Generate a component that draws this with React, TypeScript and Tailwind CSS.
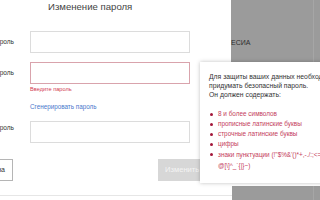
import React from "react";

const items = [
  "8 и более символов",
  "прописные латинские буквы",
  "строчные латинские буквы",
  "цифры",
];

export default function App() {
  return (
    <div
      className="relative w-[320px] h-[200px] overflow-hidden bg-white text-[#333]"
      style={{ fontFamily: '"Liberation Sans", Arial, sans-serif' }}
    >
      {/* form */}
      <div className="flex flex-col">
        <div className="pl-[48px] h-[14px] leading-[14px] text-[9.6px] text-[#444]">
          Изменение пароля
        </div>
        <div className="ml-[-60px] mt-[17px] grid grid-cols-[74px_160px] gap-x-[16px]">
          <div className="h-[22px] flex items-center justify-end text-[6.5px]">Старый пароль</div>
          <div className="h-[22px] border border-[#dcdcdc] bg-white" />

          <div className="h-[22px] mt-[9px] flex items-center justify-end text-[6.5px]">Новый пароль</div>
          <div className="h-[22px] mt-[9px] border border-[#d9a3ac] bg-white" />

          <div />
          <div className="mt-[1px] leading-[8px] text-[5.6px] text-[#d23a52]">Введите пароль</div>

          <div />
          <div className="mt-[10px] leading-[8px] text-[6.3px] text-[#4a78cc]">Сгенерировать пароль</div>

          <div className="h-[22px] mt-[10px] pt-[2px] flex items-start justify-end text-[6.5px]">Повторите пароль</div>
          <div className="h-[22px] mt-[10px] border border-[#dcdcdc] bg-white" />
        </div>
        <div className="mt-[16px] flex items-start">
          <div className="ml-[-28px] w-[41px] h-[22px] border border-[#b5b5b5] flex items-center justify-end pr-[7px] text-[7px] text-[#333]">
            Отмена
          </div>
          <div className="ml-[145px] w-[80px] h-[22px] bg-[#d7d7d7] flex items-center pl-[7px] text-[7.6px] text-[#f4f4f4]">
            Изменить
          </div>
        </div>
        <div className="mt-[14px] w-[232px] h-px bg-[#e6e6e6]" />
      </div>

      {/* dimmed region top-right */}
      <div className="absolute left-[231px] top-0 w-[89px] h-[62px] bg-[#9b9b9b] flex">
        <div className="flex-1 pt-[39px] text-[7px] text-[#2e2e2e] leading-[8px]">ЕСИА</div>
        <div className="w-px h-full bg-[#a6a6a6] mr-[6px]" />
      </div>
      {/* dimmed region bottom-right */}
      <div className="absolute left-[232px] top-[186px] w-[88px] h-[14px] bg-[#9b9b9b] flex justify-end">
        <div className="w-px h-full bg-[#a6a6a6] mr-[6px]" />
      </div>

      {/* popup */}
      <div className="absolute left-[200px] top-[62px] w-[140px] h-[121px] bg-white shadow-[0_0_4px_rgba(0,0,0,0.25)] pl-[9px] pt-[10px]">
        <div className="text-[6.8px] leading-[9px] text-[#333] whitespace-nowrap">
          <div>Для защиты ваших данных необходимо</div>
          <div>придумать безопасный пароль.</div>
          <div>Он должен содержать:</div>
        </div>
        <ul className="mt-[10px] text-[6.4px] leading-[10px] text-[#c4405c] whitespace-nowrap">
          {items.map((t) => (
            <li key={t} className="flex items-start">
              <span className="w-[3px] h-[3px] rounded-full bg-[#a3173a] mt-[4px] ml-[1px] mr-[5px] shrink-0" />
              <span>{t}</span>
            </li>
          ))}
          <li className="flex items-start">
            <span className="w-[3px] h-[3px] rounded-full bg-[#a3173a] mt-[4px] ml-[1px] mr-[5px] shrink-0" />
            <span className="leading-[11px]">
              знаки пунктуации (!"$%&amp;'()*+,-./:;&lt;=&gt;?
              <br />
              @[\]^_`{"{|}"}~)
            </span>
          </li>
        </ul>
      </div>
    </div>
  );
}
